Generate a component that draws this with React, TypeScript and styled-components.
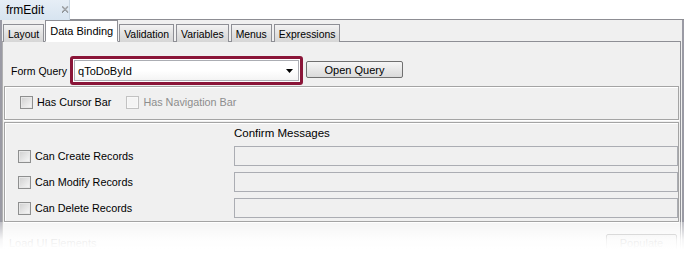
import styled, { createGlobalStyle } from "styled-components";

const GlobalStyle = createGlobalStyle`
  html, body {
    margin: 0;
    padding: 0;
    background: #ffffff;
  }
  body {
    font-family: "Liberation Sans", Arial, sans-serif;
    font-size: 11px;
    color: #000;
  }
`;

const tabs = ["Layout", "Data Binding", "Validation", "Variables", "Menus", "Expressions"];
const records = ["Can Create Records", "Can Modify Records", "Can Delete Records"];

export default function App() {
  return (
    <>
      <GlobalStyle />
      <Screen>
        <DocHeader>
          <DocTab>
            <DocTitle>frmEdit</DocTitle>
            <CloseIcon />
          </DocTab>
          <DocLine />
        </DocHeader>
        <Frame>
          <TabBar>
            {tabs.map((t) => (
              <Tab key={t} $active={t === "Data Binding"}>
                {t}
              </Tab>
            ))}
          </TabBar>
          <TabPanel>
            <QueryRow>
              <Label>Form Query</Label>
              <FocusRing>
                <Combo>
                  <span>qToDoById</span>
                  <Arrow />
                </Combo>
              </FocusRing>
              <Button>Open Query</Button>
            </QueryRow>
            <GroupBox $height={34}>
              <BarRow>
                <Check>
                  <Box />
                  <span>Has Cursor Bar</span>
                </Check>
                <Check $disabled>
                  <Box $disabled />
                  <span>Has Navigation Bar</span>
                </Check>
              </BarRow>
            </GroupBox>
            <GroupBox $height={100}>
              <ConfirmGrid>
                <span />
                <ColTitle>Confirm Messages</ColTitle>
                {records.map((r) => (
                  <RecordRow key={r}>
                    <Check>
                      <Box />
                      <span>{r}</span>
                    </Check>
                    <Field />
                  </RecordRow>
                ))}
              </ConfirmGrid>
            </GroupBox>
            <FooterRow>
              <span>Load UI Elements</span>
              <FooterButton>Populate</FooterButton>
            </FooterRow>
          </TabPanel>
        </Frame>
        <Fade />
      </Screen>
    </>
  );
}

// small checkered "x" used by the document tab
function CloseIcon() {
  const cells: [number, number][] = [];
  for (let i = 0; i < 7; i++) {
    cells.push([i, i]);
    if (i !== 3) cells.push([6 - i, i]);
    if (i < 6) {
      cells.push([i + 1, i]);
      if (i !== 2) cells.push([5 - i, i]);
    }
  }
  return (
    <svg width="8" height="8" viewBox="0 0 8 8" style={{ marginLeft: 18 }}>
      {cells.map(([x, y], i) => (
        <rect key={i} x={x} y={y} width="1" height="1" fill={(x + y) % 2 ? "#b0b0b0" : "#4a4a4a"} />
      ))}
    </svg>
  );
}

function Arrow() {
  return (
    <svg width="7" height="4" viewBox="0 0 7 4">
      <path d="M0 0h7L3.5 4z" fill="#000" />
    </svg>
  );
}

const Screen = styled.div`
  position: relative;
  width: 685px;
  height: 261px;
  overflow: hidden;
  background: #fff;
`;

const DocHeader = styled.div`
  display: flex;
  align-items: flex-end;
  height: 20px;
`;

const DocTab = styled.div`
  display: flex;
  align-items: center;
  width: 70px;
  height: 20px;
  box-sizing: border-box;
  padding-left: 6px;
  background: linear-gradient(#e6eef6, #d7e4f0);
  border-right: 1px solid #c9d6e2;
`;

const DocTitle = styled.span`
  font-size: 12px;
`;

const DocLine = styled.div`
  flex: 1;
  height: 1px;
  background: #8d8d93;
  margin-right: 1px;
`;

const Frame = styled.div`
  height: 241px;
  box-sizing: border-box;
  padding: 0 1px 0 0;
  background: #f0f0f0;
  border-left: 2px solid #9a9aa4;
  border-right: 2px solid #9a9aa4;
  margin-right: 1px;
`;

const TabBar = styled.div`
  display: flex;
  align-items: flex-end;
  gap: 2px;
  height: 22px;
  padding-left: 1px;
  position: relative;
  z-index: 1;
`;

const Tab = styled.div<{ $active?: boolean }>`
  display: flex;
  align-items: center;
  box-sizing: border-box;
  padding: 0 4px;
  border: 1px solid #8e8f95;
  border-bottom: ${(p) => (p.$active ? "1px solid #fff" : "none")};
  height: ${(p) => (p.$active ? 22 : 18)}px;
  margin: ${(p) => (p.$active ? "0 -1px" : "0")};
  padding-top: ${(p) => (p.$active ? 0 : 1)}px;
  background: ${(p) => (p.$active ? "#fff" : "linear-gradient(#f3f3f3, #e2e2e2 50%, #d6d6d6)")};
  font-size: ${(p) => (p.$active ? 11 : 10.4)}px;
  white-space: nowrap;
`;

const TabPanel = styled.div`
  height: 220px;
  box-sizing: border-box;
  margin-top: -1px;
  border-top: 1px solid #8e8f95;
  border-left: 1px solid #b0b0b0;
  border-right: 1px solid #8e8f95;
  padding: 0 1px;
  display: flex;
  flex-direction: column;
`;

const QueryRow = styled.div`
  display: flex;
  align-items: flex-start;
  height: 44px;
  padding: 14px 0 0 7px;
  box-sizing: border-box;
`;

const Label = styled.span`
  margin: 9px 3px 0 0;
  font-size: 10.5px;
`;

const FocusRing = styled.div`
  width: 233px;
  height: 29px;
  box-sizing: border-box;
  border: 3px solid #8a1538;
  border-radius: 3px;
  padding: 1px;
  background: #fff;
`;

const Combo = styled.div`
  display: flex;
  align-items: center;
  justify-content: space-between;
  height: 100%;
  box-sizing: border-box;
  border: 1px solid #abadb3;
  padding: 0 5px 0 3px;
  font-size: 11px;
  background: linear-gradient(#ffffff, #ffffff 50%, #f4f4f4);
`;

const Button = styled.div`
  display: flex;
  align-items: center;
  justify-content: center;
  width: 97px;
  height: 17px;
  box-sizing: border-box;
  margin: 5px 0 0 3px;
  border: 1px solid #707070;
  border-radius: 2px;
  background: linear-gradient(#f6f6f6, #e8e8e8 50%, #dadada);
`;

const GroupBox = styled.div<{ $height: number }>`
  height: ${(p) => p.$height}px;
  box-sizing: border-box;
  border: 1px solid #a4a4a4;
  box-shadow: inset 1px 1px 0 #fff, 0 1px 0 #fff;
  margin-bottom: 2px;
`;

const BarRow = styled.div`
  display: flex;
  align-items: center;
  gap: 15px;
  height: 100%;
  padding-left: 15px;
  padding-bottom: 2px;
  box-sizing: border-box;
`;

const Check = styled.label<{ $disabled?: boolean }>`
  display: flex;
  align-items: center;
  gap: 4px;
  color: ${(p) => (p.$disabled ? "#8d8d8d" : "#000")};
  white-space: nowrap;
  font-size: 10.8px;
`;

const Box = styled.span<{ $disabled?: boolean }>`
  display: inline-block;
  width: 13px;
  height: 13px;
  box-sizing: border-box;
  border: 1px solid ${(p) => (p.$disabled ? "#c2c2c2" : "#8e8f8f")};
  background: ${(p) =>
    p.$disabled
      ? "#f4f4f4"
      : "linear-gradient(135deg, #cfcfcf, #f0f0f0 80%, #fafafa)"};
  box-shadow: inset 0 0 0 1px ${(p) => (p.$disabled ? "#f8f8f8" : "#e8e8e8")};
`;

const ConfirmGrid = styled.div`
  display: grid;
  grid-template-columns: 216px 444px;
  padding: 3px 0 0 13px;
  row-gap: 6px;
`;

const ColTitle = styled.span`
  height: 14px;
  line-height: 14px;
  font-size: 11.5px;
`;

const RecordRow = styled.div`
  display: contents;
`;

const Field = styled.div`
  height: 20px;
  box-sizing: border-box;
  border: 1px solid #abadb3;
  background: #f0f0f0;
`;

const FooterRow = styled.div`
  display: flex;
  align-items: center;
  justify-content: space-between;
  padding: 10px 2px 0 5px;
  color: #333;
`;

const FooterButton = styled.div`
  display: flex;
  align-items: center;
  justify-content: center;
  width: 71px;
  height: 17px;
  box-sizing: border-box;
  border: 1px solid #707070;
  border-radius: 2px;
  background: #e4e4e4;
`;

const Fade = styled.div`
  position: absolute;
  left: 0;
  right: 0;
  top: 222px;
  bottom: 0;
  background: linear-gradient(rgba(255, 255, 255, 0.35), rgba(255, 255, 255, 0.9) 45%, #fff 70%);
  pointer-events: none;
`;
